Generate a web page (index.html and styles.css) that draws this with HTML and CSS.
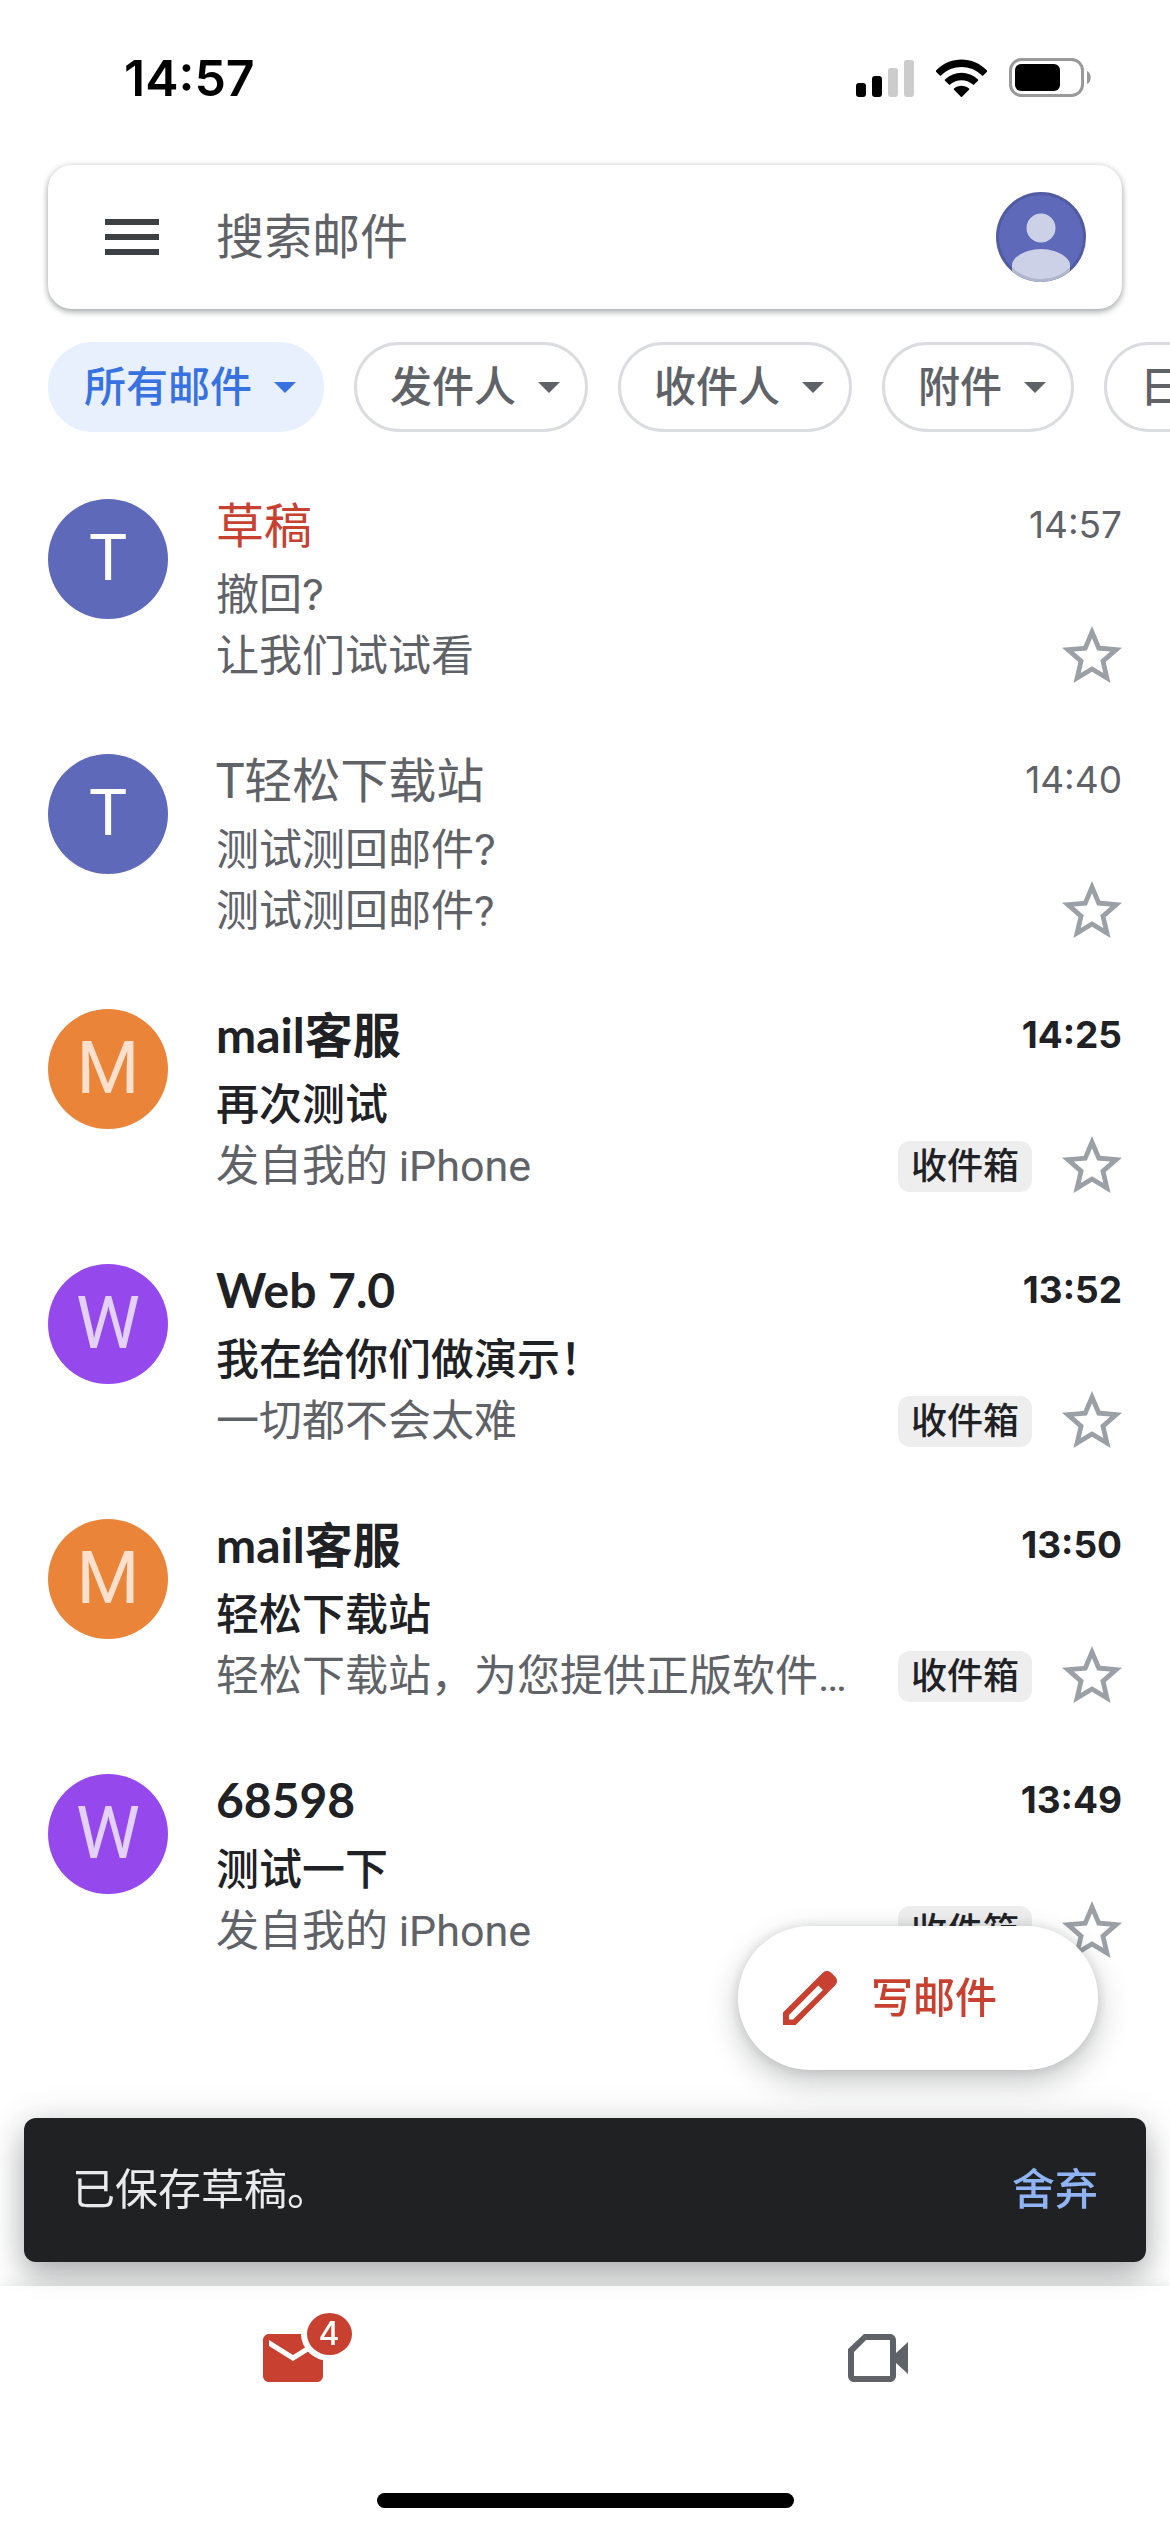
FILE: index.html
```html
<!DOCTYPE html>
<html lang="zh-CN">
<head>
    <meta charset="UTF-8">
    <meta name="viewport" content="width=device-width, initial-scale=1.0">
    <title>搜索邮件</title>
    <link rel="stylesheet" href="styles.css">
</head>
<body>
    <!-- Shared icons -->
    <svg class="sprite" aria-hidden="true">
        <symbol id="star" viewBox="2 2 20 20">
            <path d="M22 9.24l-7.19-.62L12 2 9.19 8.63 2 9.24l5.46 4.73L5.82 21 12 17.27 18.18 21l-1.63-7.03L22 9.24zM12 15.4l-3.76 2.27 1-4.28-3.32-2.88 4.38-.38L12 6.1l1.71 4.04 4.38.38-3.32 2.88 1 4.28L12 15.4z"/>
        </symbol>
        <symbol id="caret" viewBox="0 0 22 11">
            <path d="M0 0h22L11 11z"/>
        </symbol>
    </svg>

    <div class="status-bar">
        <span class="clock">14:57</span>
        <div class="status-icons">
            <svg width="58" height="38" viewBox="0 0 58 38">
                <rect x="0" y="24" width="10" height="14" rx="3"/>
                <rect x="16" y="17" width="10" height="21" rx="3"/>
                <rect x="32" y="9" width="10" height="29" rx="3" fill="#ccc"/>
                <rect x="48" y="1" width="10" height="37" rx="3" fill="#ccc"/>
            </svg>
            <svg width="51" height="38" viewBox="0 0 51 38">
                <path d="M0 11.5C14-3.3 37-3.3 51 11.5c.3.4.3.8 0 1.200l-3.800 3.800c-.4.4-.9.4-1.300 0C34.500 5.300 16.500 5.300 5.100 16.500c-.4.4-.9.4-1.300 0L0 12.700c-.3-.4-.3-.8 0-1.200z"/>
                <path d="M9 20.500c9.500-9 23.500-9 33 0 .4.4.4.8 0 1.200l-3.900 3.900c-.4.4-.8.4-1.200 0-6.500-5.900-16.300-5.900-22.800 0-.4.4-.8.4-1.200 0L9 21.700c-.4-.4-.4-.8 0-1.200z"/>
                <path d="M18 29.600c4.300-3.800 10.700-3.800 15 0 .4.400.4.800 0 1.200l-6.900 6.900c-.4.400-.8.400-1.200 0L18 30.800c-.4-.4-.4-.8 0-1.200z"/>
            </svg>
            <svg width="82" height="40" viewBox="0 0 82 40">
                <rect x="1.500" y="1.500" width="72" height="36" rx="11" fill="none" stroke="#999" stroke-width="3"/>
                <rect x="6" y="6" width="45" height="27" rx="6"/>
                <path d="M78 13c5 2 5 11 0 13z" fill="#999"/>
            </svg>
        </div>
    </div>

    <header class="header">
        <form class="search" role="search">
            <button class="menu-button" type="button" aria-label="菜单">
                <svg width="54" height="36" viewBox="0 0 54 36">
                    <path d="M0 0h54v6H0zM0 15h54v6H0zM0 30h54v6H0z"/>
                </svg>
            </button>
            <input class="search-input" type="search" placeholder="搜索邮件" aria-label="搜索邮件">
            <button class="account" type="button" aria-label="帐号">
                <svg width="90" height="90" viewBox="0 0 90 90">
                    <clipPath id="round"><circle cx="45" cy="45" r="45"/></clipPath>
                    <g clip-path="url(#round)">
                        <path fill="#5e69b9" d="M0 0h90v90H0z"/>
                        <circle cx="45" cy="36" r="14.500" fill="#cdd1e8"/>
                        <path fill="#cdd1e8" d="M16 90V73c0-8 14-16 29-16s29 8 29 16v17z"/>
                    </g>
                    <circle cx="45" cy="45" r="43.500" fill="none" stroke="#000" stroke-opacity=".13" stroke-width="3"/>
                </svg>
            </button>
        </form>
    </header>

    <div class="filters">
        <button class="chip selected" type="button">所有邮件<svg class="caret"><use href="#caret"/></svg></button>
        <button class="chip" type="button">发件人<svg class="caret"><use href="#caret"/></svg></button>
        <button class="chip" type="button">收件人<svg class="caret"><use href="#caret"/></svg></button>
        <button class="chip" type="button">附件<svg class="caret"><use href="#caret"/></svg></button>
        <button class="chip" type="button">日期<svg class="caret"><use href="#caret"/></svg></button>
    </div>

    <main>
        <ul class="mail-list">
            <li class="mail">
                <div class="avatar blue">T</div>
                <div class="mail-body">
                    <div class="line-top">
                        <span class="sender draft">草稿</span>
                        <time class="time">14:57</time>
                    </div>
                    <div class="subject">撤回?</div>
                    <div class="line-bottom">
                        <span class="snippet">让我们试试看</span>
                        <button class="star" type="button" aria-label="加星标"><svg><use href="#star"/></svg></button>
                    </div>
                </div>
            </li>
            <li class="mail">
                <div class="avatar blue">T</div>
                <div class="mail-body">
                    <div class="line-top">
                        <span class="sender">T轻松下载站</span>
                        <time class="time">14:40</time>
                    </div>
                    <div class="subject">测试测回邮件?</div>
                    <div class="line-bottom">
                        <span class="snippet">测试测回邮件?</span>
                        <button class="star" type="button" aria-label="加星标"><svg><use href="#star"/></svg></button>
                    </div>
                </div>
            </li>
            <li class="mail unread">
                <div class="avatar orange">M</div>
                <div class="mail-body">
                    <div class="line-top">
                        <span class="sender">mail客服</span>
                        <time class="time">14:25</time>
                    </div>
                    <div class="subject">再次测试</div>
                    <div class="line-bottom">
                        <span class="snippet">发自我的 iPhone</span>
                        <span class="label">收件箱</span>
                        <button class="star" type="button" aria-label="加星标"><svg><use href="#star"/></svg></button>
                    </div>
                </div>
            </li>
            <li class="mail unread">
                <div class="avatar purple">W</div>
                <div class="mail-body">
                    <div class="line-top">
                        <span class="sender">Web 7.0</span>
                        <time class="time">13:52</time>
                    </div>
                    <div class="subject">我在给你们做演示！</div>
                    <div class="line-bottom">
                        <span class="snippet">一切都不会太难</span>
                        <span class="label">收件箱</span>
                        <button class="star" type="button" aria-label="加星标"><svg><use href="#star"/></svg></button>
                    </div>
                </div>
            </li>
            <li class="mail unread">
                <div class="avatar orange">M</div>
                <div class="mail-body">
                    <div class="line-top">
                        <span class="sender">mail客服</span>
                        <time class="time">13:50</time>
                    </div>
                    <div class="subject">轻松下载站</div>
                    <div class="line-bottom">
                        <span class="snippet">轻松下载站，为您提供正版软件…</span>
                        <span class="label">收件箱</span>
                        <button class="star" type="button" aria-label="加星标"><svg><use href="#star"/></svg></button>
                    </div>
                </div>
            </li>
            <li class="mail unread">
                <div class="avatar purple">W</div>
                <div class="mail-body">
                    <div class="line-top">
                        <span class="sender">68598</span>
                        <time class="time">13:49</time>
                    </div>
                    <div class="subject">测试一下</div>
                    <div class="line-bottom">
                        <span class="snippet">发自我的 iPhone</span>
                        <span class="label">收件箱</span>
                        <button class="star" type="button" aria-label="加星标"><svg><use href="#star"/></svg></button>
                    </div>
                </div>
            </li>
        </ul>
    </main>

    <button class="compose" type="button">
        <svg width="54" height="54" viewBox="0 0 54 54">
            <path fill-rule="evenodd" d="M0 41.500L39.500 2c2.700-2.700 6.300-2.700 9 0l3.500 3.500c2.700 2.700 2.700 6.300 0 9L12.700 54H0zM6 44v4.500h4L40 19l-4.700-4.500z"/>
        </svg>
        写邮件
    </button>

    <div class="snackbar" role="status">
        <span>已保存草稿。</span>
        <button class="snackbar-action" type="button">舍弃</button>
    </div>

    <nav class="bottom-nav">
        <div class="tabs">
            <a class="tab mail-tab" href="#mail" aria-label="邮件">
                <span class="tab-icon">
                    <svg width="60" height="48" viewBox="0 0 60 48">
                        <path fill-rule="evenodd" d="M6 0h48c3.300 0 6 2.700 6 6v36c0 3.300-2.700 6-6 6H6c-3.300 0-6-2.700-6-6V6c0-3.300 2.700-6 6-6zM6 6v6l24 15 24-15V6L30 21z"/>
                    </svg>
                    <span class="badge">4</span>
                </span>
            </a>
            <a class="tab" href="#meet" aria-label="会议">
                <svg width="60" height="48" viewBox="0 0 60 48">
                    <path fill-rule="evenodd" d="M16 0h26c3.300 0 6 2.700 6 6v13L60 8v32L48 29v13c0 3.300-2.700 6-6 6H6c-3.300 0-6-2.700-6-6V15zM18 6L6 18v24h36V6z"/>
                </svg>
            </a>
        </div>
        <div class="home-indicator"></div>
    </nav>
</body>
</html>
```
FILE: styles.css
```css
* {
    margin: 0;
    padding: 0;
    box-sizing: border-box;
}

body {
    font-family: Inter, "Noto Sans CJK SC", sans-serif;
    line-height: 1.2;
    background: #fff;
    color: #5f6368;
    min-height: 100vh;
    display: flex;
    flex-direction: column;
    overflow-x: hidden;
}

button,
input {
    font: inherit;
    color: inherit;
    background: none;
    border: none;
    outline: none;
}

button {
    cursor: pointer;
}

svg {
    display: block;
    fill: currentColor;
    flex-shrink: 0;
}

.sprite {
    display: none;
}

/* Status bar */
.status-bar {
    display: flex;
    align-items: center;
    justify-content: space-between;
    height: 156px;
    padding: 0 79px 0 124px;
    color: #000;
}

.clock {
    font-size: 50px;
    font-weight: 600;
}

.status-icons {
    display: flex;
    align-items: center;
    gap: 22px;
}

/* Search */
.header {
    padding: 9px 48px 0;
}

.search {
    display: flex;
    align-items: center;
    height: 144px;
    padding: 0 36px 0 57px;
    border-radius: 24px;
    background: #fff;
    box-shadow: 0 3px 6px rgba(60, 64, 67, 0.4), 0 0 6px rgba(60, 64, 67, 0.15);
}

.menu-button {
    color: #3c4043;
}

.search-input {
    flex: 1;
    min-width: 0;
    margin: 0 57px;
    font-size: 48px;
}

.search-input::placeholder {
    color: #5f6368;
    opacity: 1;
}

/* Filter chips */
.filters {
    display: flex;
    gap: 30px;
    padding: 33px 48px 39px;
    overflow: hidden;
}

.chip {
    display: flex;
    align-items: center;
    flex-shrink: 0;
    gap: 22px;
    height: 90px;
    padding: 0 25px 0 33px;
    border: 3px solid #dadce0;
    border-radius: 45px;
    font-size: 42px;
    font-weight: 500;
}

.chip.selected {
    background: #e8f0fe;
    border-color: #e8f0fe;
    color: #3871e0;
}

.caret {
    width: 22px;
    height: 11px;
}

/* Mail list */
.mail-list {
    list-style: none;
}

.mail {
    display: flex;
    gap: 48px;
    padding: 28px 48px 39px;
}

.avatar {
    display: flex;
    align-items: center;
    justify-content: center;
    flex-shrink: 0;
    width: 120px;
    height: 120px;
    border-radius: 50%;
    font-family: Roboto, sans-serif;
    font-size: 72px;
    color: rgba(255, 255, 255, 0.75);
}

.avatar.blue {
    background: #5e69b9;
    color: #fff;
    font-size: 64px;
}

.avatar.orange {
    background: #ea8438;
}

.avatar.purple {
    background: #9548ec;
}

.mail-body {
    flex: 1;
    min-width: 0;
}

.line-top {
    display: flex;
    align-items: center;
    justify-content: space-between;
    height: 52px;
    margin-bottom: 12px;
}

.sender {
    font-family: Lato, "Noto Sans CJK SC", sans-serif;
    font-size: 48px;
    line-height: 52px;
}

.sender.draft {
    color: #c74030;
}

.time {
    font-size: 37px;
}

.subject,
.snippet {
    font-size: 43px;
    line-height: 62px;
    white-space: nowrap;
}

.line-bottom {
    display: flex;
    align-items: center;
    gap: 30px;
    height: 62px;
}

.snippet {
    flex: 1;
    min-width: 0;
    font-family: Roboto, "Noto Sans CJK SC", sans-serif;
}

.unread .sender,
.unread .time {
    color: #202124;
    font-weight: 700;
}

.unread .subject {
    color: #202124;
    font-weight: 500;
}

.label {
    padding: 0 13px;
    border-radius: 12px;
    background: #eee;
    color: #202124;
    font-size: 36px;
    font-weight: 500;
    line-height: 51px;
}

.star {
    color: #9aa0a6;
}

.star svg {
    width: 60px;
    height: 60px;
}

/* Compose button */
.compose {
    position: fixed;
    right: 72px;
    bottom: 462px;
    display: flex;
    align-items: center;
    gap: 34px;
    width: 360px;
    height: 144px;
    padding-left: 45px;
    border-radius: 72px;
    background: #fff;
    box-shadow: 0 12px 30px rgba(60, 64, 67, 0.3), 0 0 12px rgba(60, 64, 67, 0.15);
    color: #c74030;
    font-size: 42px;
    font-weight: 500;
}

/* Snackbar */
.snackbar {
    position: fixed;
    left: 24px;
    right: 24px;
    bottom: 270px;
    display: flex;
    align-items: center;
    justify-content: space-between;
    height: 144px;
    padding: 0 48px;
    border-radius: 12px;
    background: #202123;
    box-shadow: 0 18px 30px rgba(60, 64, 67, 0.3), 0 3px 36px rgba(60, 64, 67, 0.2);
    color: #e8eaed;
    font-size: 43px;
}

.snackbar-action {
    color: #8fb3f3;
    font-weight: 500;
}

/* Bottom navigation */
.bottom-nav {
    position: relative;
    z-index: 1;
    display: flex;
    flex-direction: column;
    align-items: center;
    justify-content: space-between;
    height: 246px;
    margin-top: auto;
    padding-bottom: 24px;
    background: linear-gradient(rgba(255, 255, 255, 0.7), #fff 30px);
    box-shadow: 0 -2px 12px rgba(60, 64, 67, 0.12);
}

.tabs {
    display: flex;
    width: 100%;
}

.tab {
    flex: 1;
    display: flex;
    align-items: center;
    justify-content: center;
    height: 144px;
    color: #5f6368;
}

.mail-tab {
    color: #c74030;
}

.tab-icon {
    position: relative;
}

.badge {
    position: absolute;
    top: -27px;
    left: 38px;
    width: 57px;
    height: 54px;
    border: 6px solid #fff;
    border-radius: 50%;
    background: #c74030;
    color: #fff;
    font-size: 32px;
    font-weight: 500;
    line-height: 42px;
    text-align: center;
}

.home-indicator {
    width: 417px;
    height: 15px;
    border-radius: 8px;
    background: #000;
}
```
